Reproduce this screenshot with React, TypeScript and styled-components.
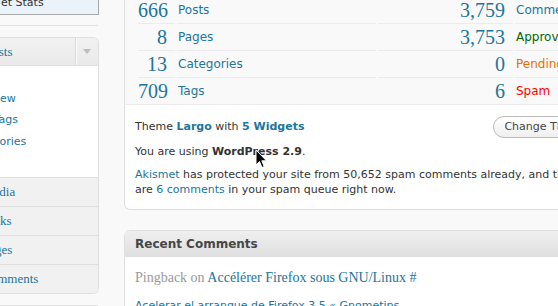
import { Fragment } from 'react';
import styled, { createGlobalStyle } from 'styled-components';

const GlobalStyle = createGlobalStyle`
  html, body {
    margin: 0;
    padding: 0;
    background: #f9f9f9;
    overflow: hidden;
  }
  body {
    font-family: "DejaVu Sans", Verdana, sans-serif;
    color: #333;
  }
`;

const SANS = `"DejaVu Sans", Verdana, sans-serif`;
const SERIF = `"Liberation Serif", "Times New Roman", serif`;
const LINK = '#21759b';

const Layout = styled.div`
  position: relative;
  display: flex;
  gap: 25px;
  width: 558px;
  height: 306px;
  overflow: hidden;
`;

/* ---------- admin menu (scrolled partly out of view) ---------- */

const Sidebar = styled.aside`
  flex: none;
  width: 99px;
  overflow: hidden;
`;

const SidebarInner = styled.div`
  width: 145px;
  margin-left: -46px;
`;

const StatsBox = styled.div`
  box-sizing: border-box;
  height: 15px;
  overflow: hidden;
  background: #eaf2fa;
  border-right: 1px solid #a8a8a8;
  border-bottom: 1px solid #a8a8a8;
`;

const StatsText = styled.div`
  margin-top: -4px;
  padding-left: 47px;
  font: 11px/14px ${SANS};
  color: #333;
  white-space: nowrap;
`;

const SideRule = styled.hr<{ $top: number; $bottom: number }>`
  border: 0;
  height: 1px;
  background: #e3e3e3;
  margin: ${({ $top }) => $top}px 1px ${({ $bottom }) => $bottom}px 0;
`;

const MenuBox = styled.div`
  border: 1px solid #dfdfdf;
  border-left: 0;
  border-radius: 0 6px 6px 0;
  overflow: hidden;
`;

const MenuHead = styled.div`
  display: flex;
  height: 27px;
  background: linear-gradient(#f2f2f2, #e9e9e9);
`;

const HeadLabel = styled.div`
  flex: 1;
  padding-left: 31px;
  font: 13px/28px ${SERIF};
  color: ${LINK};
  white-space: nowrap;
`;

const Toggle = styled.div`
  flex: none;
  width: 22px;
  display: flex;
  align-items: center;
  justify-content: center;
  border-left: 1px solid #dcdcdc;
  box-shadow: inset 1px 0 #fafafa;

  &::after {
    content: '';
    border-left: 4px solid transparent;
    border-right: 4px solid transparent;
    border-top: 5px solid #bdbdbd;
  }
`;

const SubMenu = styled.ul`
  list-style: none;
  margin: 0;
  padding: 0 0 25px;
  background: #fff;
  border-top: 1px solid #dfdfdf;
`;

const SubItem = styled.li`
  height: 21.5px;
  padding-left: 13px;
  font: 11px/21.5px ${SANS};
  color: ${LINK};
  white-space: nowrap;
`;

const TopItem = styled.div`
  height: 28px;
  border-top: 1px solid #dfdfdf;
  background: #f1f1f1;
  padding-left: 28px;
  font: 13px/28px ${SERIF};
  color: ${LINK};
  white-space: nowrap;
`;

/* ---------- dashboard boxes ---------- */

const Main = styled.main`
  flex: none;
  width: 476px;
`;

const RightNowBox = styled.section`
  background: #fff;
  border: 1px solid #dfdfdf;
  border-top: 0;
  border-radius: 0 0 6px 6px;
  overflow: hidden;
`;

const StatsBand = styled.div`
  display: grid;
  grid-template-columns: 37px 199px 135px 1fr;
  column-gap: 2px;
  margin-top: -4px;
  padding-left: 13px;
  background: #f9f9f9;
  border-bottom: 1px solid #ececec;
`;

const NumCell = styled.div`
  box-sizing: border-box;
  height: 27px;
  border-top: 1px solid #ececec;
  padding-right: 8px;
  text-align: right;
  font: 20px/26px ${SERIF};
  color: ${LINK};
  white-space: nowrap;
`;

const LabelCell = styled.div<{ $color: string }>`
  box-sizing: border-box;
  height: 27px;
  border-top: 1px solid #ececec;
  padding-left: 1px;
  font: 12px/26px ${SANS};
  color: ${({ $color }) => $color};
  white-space: nowrap;
`;

const BoxBody = styled.div`
  padding: 0 10px 12px 10px;
  font: 11px/15px ${SANS};
  color: #333;
`;

const ThemeLine = styled.div`
  display: flex;
  align-items: center;
  margin-top: 10px;
  height: 23px;
`;

const Link = styled.a<{ $bold?: boolean }>`
  color: ${LINK};
  text-decoration: none;
  font-weight: ${({ $bold }) => ($bold ? 'bold' : 'normal')};
`;

const Button = styled.button`
  margin-left: auto;
  margin-right: -10px;
  height: 22px;
  padding: 0 10px;
  border: 1px solid #bbb;
  border-radius: 11px;
  background: linear-gradient(#fff, #efefef);
  font: 11px ${SANS};
  color: #464646;
  white-space: nowrap;
`;

const Para = styled.p<{ $top: number }>`
  margin: ${({ $top }) => $top}px 0 0;
`;

const RecentBox = styled.section`
  margin-top: 20px;
  border: 1px solid #dfdfdf;
  border-radius: 6px 6px 0 0;
  overflow: hidden;
  background: #fff;
`;

const BoxHeader = styled.h3`
  margin: 0;
  height: 26px;
  padding-left: 10px;
  background: linear-gradient(#efefef, #dfdfdf);
  font: bold 12px/27px ${SANS};
  color: #464646;
`;

const CommentList = styled.div`
  padding: 12px 10px 0;
`;

const CommentLine = styled.div`
  font: 14px/18px ${SERIF};
  color: #999;
  white-space: nowrap;
`;

const CommentMeta = styled.div`
  margin-top: 11px;
  font: 11px/16px ${SANS};
  color: ${LINK};
  white-space: nowrap;
`;

const Cursor = styled.svg`
  position: absolute;
  left: 255px;
  top: 149px;
`;

const content = [
  { n: '666', label: 'Posts', n2: '3,759', label2: 'Comments', color2: LINK },
  { n: '8', label: 'Pages', n2: '3,753', label2: 'Approved', color2: '#006505' },
  { n: '13', label: 'Categories', n2: '0', label2: 'Pending', color2: '#e66f00' },
  { n: '709', label: 'Tags', n2: '6', label2: 'Spam', color2: '#ff0000' },
];

const subItems = ['Edit', 'Add New', 'Post Tags', 'Categories'];
const topItems = ['Media', 'Links', 'Pages', 'Comments'];

export default function App() {
  return (
    <>
      <GlobalStyle />
      <Layout>
        <Sidebar>
          <SidebarInner>
            <StatsBox>
              <StatsText>et Stats</StatsText>
            </StatsBox>
            <SideRule $top={10} $bottom={11} />
            <MenuBox>
              <MenuHead>
                <HeadLabel>Posts</HeadLabel>
                <Toggle />
              </MenuHead>
              <SubMenu>
                {subItems.map((s) => (
                  <SubItem key={s}>{s}</SubItem>
                ))}
              </SubMenu>
              {topItems.map((t) => (
                <TopItem key={t}>{t}</TopItem>
              ))}
            </MenuBox>
            <SideRule $top={11} $bottom={0} />
          </SidebarInner>
        </Sidebar>

        <Main>
          <RightNowBox>
            <StatsBand>
              {content.map((r) => (
                <Fragment key={r.label}>
                  <NumCell>{r.n}</NumCell>
                  <LabelCell $color={LINK}>{r.label}</LabelCell>
                  <NumCell>{r.n2}</NumCell>
                  <LabelCell $color={r.color2}>{r.label2}</LabelCell>
                </Fragment>
              ))}
            </StatsBand>
            <BoxBody>
              <ThemeLine>
                <span>
                  Theme <Link $bold>Largo</Link> with <Link $bold>5 Widgets</Link>
                </span>
                <Button>Change Theme</Button>
              </ThemeLine>
              <Para $top={6}>
                You are using <b>WordPress 2.9</b>.
              </Para>
              <Para $top={8}>
                <Link>Akismet</Link> has protected your site from 50,652 spam comments already, and
                there are <Link>6 comments</Link> in your spam queue right now.
              </Para>
            </BoxBody>
          </RightNowBox>

          <RecentBox>
            <BoxHeader>Recent Comments</BoxHeader>
            <CommentList>
              <CommentLine>
                Pingback on <Link>Accélérer Firefox sous GNU/Linux</Link> <Link>#</Link>
              </CommentLine>
              <CommentMeta>Acelerar el arranque de Firefox 3.5 « Gnometips</CommentMeta>
            </CommentList>
          </RecentBox>
        </Main>

        <Cursor width="13" height="20" viewBox="0 0 13 20">
          <path
            d="M1 1 L1 16 L4.5 12.5 L7 18.5 L9.2 17.6 L6.8 11.8 L11.5 11.8 Z"
            fill="#000"
            stroke="#fff"
            strokeWidth="1"
            strokeLinejoin="round"
          />
        </Cursor>
      </Layout>
    </>
  );
}
